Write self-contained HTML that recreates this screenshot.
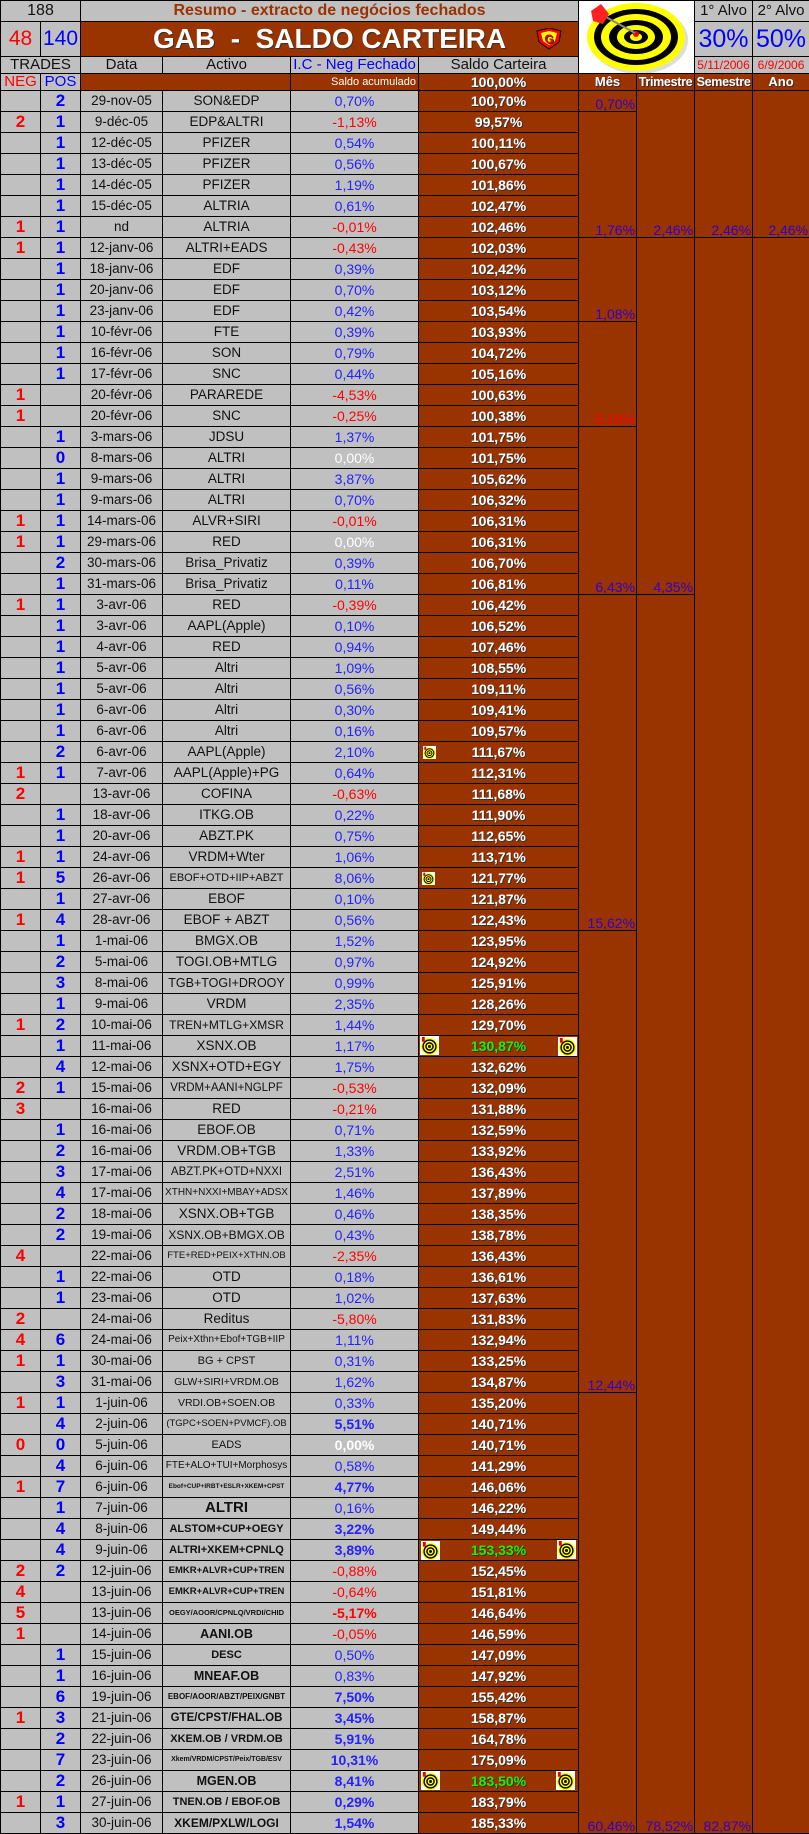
<!DOCTYPE html>
<html><head><meta charset="utf-8"><style>
*{margin:0;padding:0;box-sizing:border-box}
body{width:809px;height:1834px;background:#c0c0c0;font-family:"Liberation Sans",Arial,sans-serif;overflow:hidden}
table{border-collapse:collapse;table-layout:fixed;width:809px;position:absolute;left:0;top:0}
td{border:1px solid #000;text-align:center;font-size:13.5px;white-space:nowrap;overflow:hidden;padding:0;line-height:14px;color:#111}
tr{height:21px}
.n{color:#ff0000;font-weight:bold;font-size:17px}
.p{color:#0000ff;font-weight:bold;font-size:17px}
.b{color:#2222ff;font-size:14px}
.bb{color:#2222ff;font-weight:bold;font-size:14px}
.r{color:#ff0000;font-size:14px}
.rb{color:#ff0000;font-weight:bold;font-size:14px}
.w{color:#fff;font-size:14px}
.s{background:#993300;color:#fff;font-weight:bold;position:relative;text-shadow:1px 1px 0 #333;font-size:14px}
.g{color:#22ee00}
.m{background:#993300;vertical-align:bottom;text-align:right;color:#3300cc;font-size:14px;padding-right:1px}
.br{background:#993300}
.a{font-weight:bold}
.ic{position:absolute}
</style></head><body>
<svg width="0" height="0" style="position:absolute"><defs>
<g id="dt"><rect width="20" height="20" fill="#fff"/><circle cx="10" cy="11" r="9" fill="#ff0"/><circle cx="10" cy="11" r="7.5" fill="#000"/><circle cx="10" cy="11" r="6" fill="#ff0"/><circle cx="10" cy="11" r="4.5" fill="#000"/><circle cx="10" cy="11" r="3" fill="#ff0"/><circle cx="10" cy="11" r="1.5" fill="#000"/><rect x="2" y="1" width="3" height="5" fill="#e00"/></g>
</defs></svg>
<table>
<colgroup><col style="width:40px"><col style="width:40px"><col style="width:82px"><col style="width:128px"><col style="width:128px"><col style="width:160px"><col style="width:58px"><col style="width:58px"><col style="width:58px"><col style="width:57px"></colgroup>
<tr style="height:21px"><td colspan="2" style="font-size:16px">188</td><td colspan="4" style="color:#993300;font-weight:bold;font-size:16px">Resumo - extracto de negócios fechados</td>
<td colspan="2" rowspan="3" style="background:#fff;position:relative"><svg width="116" height="73" viewBox="0 0 116 73" style="position:absolute;left:0;top:0"><ellipse cx="60" cy="39" rx="49" ry="34" fill="#ddd"/><ellipse cx="57" cy="36" rx="49" ry="34" fill="#ff0"/><ellipse cx="57" cy="36" rx="42" ry="28" fill="#000"/><ellipse cx="57" cy="36" rx="35" ry="23" fill="#ff0"/><ellipse cx="57" cy="36" rx="27" ry="17" fill="#000"/><ellipse cx="57" cy="36" rx="19" ry="12" fill="#ff0"/><ellipse cx="57" cy="36" rx="12" ry="7" fill="#000"/><ellipse cx="57" cy="36" rx="6" ry="4" fill="#ff0"/><circle cx="57" cy="33" r="3" fill="#e00"/><line x1="25" y1="15" x2="56" y2="32" stroke="#888" stroke-width="2"/><polygon points="12,10 22,3 30,13 24,23 14,20" fill="#f22"/></svg></td>
<td style="font-size:15px">1° Alvo</td><td style="font-size:15px">2° Alvo</td></tr>
<tr style="height:35px"><td style="color:#f00;font-size:21px">48</td><td style="color:#00f;font-size:21px">140</td><td colspan="4" style="background:#993300;color:#fff;font-weight:bold;font-size:28px;position:relative;text-shadow:1px 1px 0 #333">GAB&nbsp; - &nbsp;SALDO CARTEIRA<svg width="30" height="22" viewBox="0 0 30 22" style="position:absolute;left:453px;top:6px"><polygon points="3,3 15,0 27,3 25,14 15,21 5,14" fill="#f00" stroke="#000"/><polygon points="7,5 15,3 23,5 21,13 15,17 9,13" fill="#ff0"/><text x="15" y="15" font-size="12" font-weight="bold" fill="#e00" text-anchor="middle" font-family="Liberation Sans">G</text></svg></td><td style="color:#00f;font-size:25px">30%</td><td style="color:#00f;font-size:25px">50%</td></tr>
<tr style="height:17px"><td colspan="2" style="font-size:15px">TRADES</td><td style="font-size:15px">Data</td><td style="font-size:15px">Activo</td><td style="color:#00f;font-size:15px">I.C - Neg Fechado</td><td style="font-size:15px">Saldo Carteira</td><td style="color:#f00;font-size:12px">5/11/2006</td><td style="color:#f00;font-size:12px">6/9/2006</td></tr>
<tr style="height:17px"><td style="color:#f00;font-size:15px">NEG</td><td style="color:#00f;font-size:15px">POS</td><td colspan="2" class="br"></td><td class="br" style="color:#fff;font-size:11px;text-align:right;padding-right:2px">Saldo acumulado</td><td class="s">100,00%</td><td class="s" style="font-size:13px">Mês</td><td class="s" style="font-size:12.5px;letter-spacing:-0.3px">Trimestre</td><td class="s" style="font-size:12.5px;letter-spacing:-0.3px">Semestre</td><td class="s" style="font-size:13px">Ano</td></tr>

<tr><td></td><td class="p">2</td><td>29-nov-05</td><td>SON&amp;EDP</td><td class="b">0,70%</td><td class="s">100,70%</td><td class="m">0,70%</td><td class="m" rowspan="7">2,46%</td><td class="m" rowspan="7">2,46%</td><td class="m" rowspan="7">2,46%</td></tr>
<tr><td class="n">2</td><td class="p">1</td><td>9-déc-05</td><td>EDP&amp;ALTRI</td><td class="r">-1,13%</td><td class="s">99,57%</td><td class="m" rowspan="6">1,76%</td></tr>
<tr><td></td><td class="p">1</td><td>12-déc-05</td><td>PFIZER</td><td class="b">0,54%</td><td class="s">100,11%</td></tr>
<tr><td></td><td class="p">1</td><td>13-déc-05</td><td>PFIZER</td><td class="b">0,56%</td><td class="s">100,67%</td></tr>
<tr><td></td><td class="p">1</td><td>14-déc-05</td><td>PFIZER</td><td class="b">1,19%</td><td class="s">101,86%</td></tr>
<tr><td></td><td class="p">1</td><td>15-déc-05</td><td>ALTRIA</td><td class="b">0,61%</td><td class="s">102,47%</td></tr>
<tr><td class="n">1</td><td class="p">1</td><td>nd</td><td>ALTRIA</td><td class="r">-0,01%</td><td class="s">102,46%</td></tr>
<tr><td class="n">1</td><td class="p">1</td><td>12-janv-06</td><td>ALTRI+EADS</td><td class="r">-0,43%</td><td class="s">102,03%</td><td class="m" rowspan="4">1,08%</td><td class="m" rowspan="17">4,35%</td><td class="m" rowspan="76">82,87%</td><td class="m" rowspan="76"></td></tr>
<tr><td></td><td class="p">1</td><td>18-janv-06</td><td>EDF</td><td class="b">0,39%</td><td class="s">102,42%</td></tr>
<tr><td></td><td class="p">1</td><td>20-janv-06</td><td>EDF</td><td class="b">0,70%</td><td class="s">103,12%</td></tr>
<tr><td></td><td class="p">1</td><td>23-janv-06</td><td>EDF</td><td class="b">0,42%</td><td class="s">103,54%</td></tr>
<tr><td></td><td class="p">1</td><td>10-févr-06</td><td>FTE</td><td class="b">0,39%</td><td class="s">103,93%</td><td class="m" rowspan="5" style="color:#f00">-3,16%</td></tr>
<tr><td></td><td class="p">1</td><td>16-févr-06</td><td>SON</td><td class="b">0,79%</td><td class="s">104,72%</td></tr>
<tr><td></td><td class="p">1</td><td>17-févr-06</td><td>SNC</td><td class="b">0,44%</td><td class="s">105,16%</td></tr>
<tr><td class="n">1</td><td></td><td>20-févr-06</td><td>PARAREDE</td><td class="r">-4,53%</td><td class="s">100,63%</td></tr>
<tr><td class="n">1</td><td></td><td>20-févr-06</td><td>SNC</td><td class="r">-0,25%</td><td class="s">100,38%</td></tr>
<tr><td></td><td class="p">1</td><td>3-mars-06</td><td>JDSU</td><td class="b">1,37%</td><td class="s">101,75%</td><td class="m" rowspan="8">6,43%</td></tr>
<tr><td></td><td class="p">0</td><td>8-mars-06</td><td>ALTRI</td><td class="w">0,00%</td><td class="s">101,75%</td></tr>
<tr><td></td><td class="p">1</td><td>9-mars-06</td><td>ALTRI</td><td class="b">3,87%</td><td class="s">105,62%</td></tr>
<tr><td></td><td class="p">1</td><td>9-mars-06</td><td>ALTRI</td><td class="b">0,70%</td><td class="s">106,32%</td></tr>
<tr><td class="n">1</td><td class="p">1</td><td>14-mars-06</td><td>ALVR+SIRI</td><td class="r">-0,01%</td><td class="s">106,31%</td></tr>
<tr><td class="n">1</td><td class="p">1</td><td>29-mars-06</td><td>RED</td><td class="w">0,00%</td><td class="s">106,31%</td></tr>
<tr><td></td><td class="p">2</td><td>30-mars-06</td><td>Brisa_Privatiz</td><td class="b">0,39%</td><td class="s">106,70%</td></tr>
<tr><td></td><td class="p">1</td><td>31-mars-06</td><td>Brisa_Privatiz</td><td class="b">0,11%</td><td class="s">106,81%</td></tr>
<tr><td class="n">1</td><td class="p">1</td><td>3-avr-06</td><td>RED</td><td class="r">-0,39%</td><td class="s">106,42%</td><td class="m" rowspan="16">15,62%</td><td class="m" rowspan="59">78,52%</td></tr>
<tr><td></td><td class="p">1</td><td>3-avr-06</td><td>AAPL(Apple)</td><td class="b">0,10%</td><td class="s">106,52%</td></tr>
<tr><td></td><td class="p">1</td><td>4-avr-06</td><td>RED</td><td class="b">0,94%</td><td class="s">107,46%</td></tr>
<tr><td></td><td class="p">1</td><td>5-avr-06</td><td>Altri</td><td class="b">1,09%</td><td class="s">108,55%</td></tr>
<tr><td></td><td class="p">1</td><td>5-avr-06</td><td>Altri</td><td class="b">0,56%</td><td class="s">109,11%</td></tr>
<tr><td></td><td class="p">1</td><td>6-avr-06</td><td>Altri</td><td class="b">0,30%</td><td class="s">109,41%</td></tr>
<tr><td></td><td class="p">1</td><td>6-avr-06</td><td>Altri</td><td class="b">0,16%</td><td class="s">109,57%</td></tr>
<tr><td></td><td class="p">2</td><td>6-avr-06</td><td>AAPL(Apple)</td><td class="b">2,10%</td><td class="s"><svg class="ic" width="13" height="13" viewBox="0 0 20 20" style="left:4px;top:4px"><use href="#dt"/></svg>111,67%</td></tr>
<tr><td class="n">1</td><td class="p">1</td><td>7-avr-06</td><td>AAPL(Apple)+PG</td><td class="b">0,64%</td><td class="s">112,31%</td></tr>
<tr><td class="n">2</td><td></td><td>13-avr-06</td><td>COFINA</td><td class="r">-0,63%</td><td class="s">111,68%</td></tr>
<tr><td></td><td class="p">1</td><td>18-avr-06</td><td>ITKG.OB</td><td class="b">0,22%</td><td class="s">111,90%</td></tr>
<tr><td></td><td class="p">1</td><td>20-avr-06</td><td>ABZT.PK</td><td class="b">0,75%</td><td class="s">112,65%</td></tr>
<tr><td class="n">1</td><td class="p">1</td><td>24-avr-06</td><td>VRDM+Wter</td><td class="b">1,06%</td><td class="s">113,71%</td></tr>
<tr><td class="n">1</td><td class="p">5</td><td>26-avr-06</td><td style="font-size:11px">EBOF+OTD+IIP+ABZT</td><td class="b">8,06%</td><td class="s"><svg class="ic" width="13" height="13" viewBox="0 0 20 20" style="left:3px;top:4px"><use href="#dt"/></svg>121,77%</td></tr>
<tr><td></td><td class="p">1</td><td>27-avr-06</td><td>EBOF</td><td class="b">0,10%</td><td class="s">121,87%</td></tr>
<tr><td class="n">1</td><td class="p">4</td><td>28-avr-06</td><td>EBOF + ABZT</td><td class="b">0,56%</td><td class="s">122,43%</td></tr>
<tr><td></td><td class="p">1</td><td>1-mai-06</td><td>BMGX.OB</td><td class="b">1,52%</td><td class="s">123,95%</td><td class="m" rowspan="22">12,44%</td></tr>
<tr><td></td><td class="p">2</td><td>5-mai-06</td><td>TOGI.OB+MTLG</td><td class="b">0,97%</td><td class="s">124,92%</td></tr>
<tr><td></td><td class="p">3</td><td>8-mai-06</td><td style="font-size:12.5px">TGB+TOGI+DROOY</td><td class="b">0,99%</td><td class="s">125,91%</td></tr>
<tr><td></td><td class="p">1</td><td>9-mai-06</td><td>VRDM</td><td class="b">2,35%</td><td class="s">128,26%</td></tr>
<tr><td class="n">1</td><td class="p">2</td><td>10-mai-06</td><td style="font-size:12px">TREN+MTLG+XMSR</td><td class="b">1,44%</td><td class="s">129,70%</td></tr>
<tr><td></td><td class="p">1</td><td>11-mai-06</td><td>XSNX.OB</td><td class="b">1,17%</td><td class="s"><svg class="ic" width="19" height="19" viewBox="0 0 20 20" style="left:1px;top:0px"><use href="#dt"/></svg><span class="g">130,87%</span><svg class="ic" width="19" height="19" viewBox="0 0 20 20" style="left:139px;top:1px"><use href="#dt"/></svg></td></tr>
<tr><td></td><td class="p">4</td><td>12-mai-06</td><td>XSNX+OTD+EGY</td><td class="b">1,75%</td><td class="s">132,62%</td></tr>
<tr><td class="n">2</td><td class="p">1</td><td>15-mai-06</td><td style="font-size:11.5px">VRDM+AANI+NGLPF</td><td class="r">-0,53%</td><td class="s">132,09%</td></tr>
<tr><td class="n">3</td><td></td><td>16-mai-06</td><td>RED</td><td class="r">-0,21%</td><td class="s">131,88%</td></tr>
<tr><td></td><td class="p">1</td><td>16-mai-06</td><td>EBOF.OB</td><td class="b">0,71%</td><td class="s">132,59%</td></tr>
<tr><td></td><td class="p">2</td><td>16-mai-06</td><td>VRDM.OB+TGB</td><td class="b">1,33%</td><td class="s">133,92%</td></tr>
<tr><td></td><td class="p">3</td><td>17-mai-06</td><td style="font-size:11.5px">ABZT.PK+OTD+NXXI</td><td class="b">2,51%</td><td class="s">136,43%</td></tr>
<tr><td></td><td class="p">4</td><td>17-mai-06</td><td style="font-size:10px">XTHN+NXXI+MBAY+ADSX</td><td class="b">1,46%</td><td class="s">137,89%</td></tr>
<tr><td></td><td class="p">2</td><td>18-mai-06</td><td>XSNX.OB+TGB</td><td class="b">0,46%</td><td class="s">138,35%</td></tr>
<tr><td></td><td class="p">2</td><td>19-mai-06</td><td style="font-size:12px">XSNX.OB+BMGX.OB</td><td class="b">0,43%</td><td class="s">138,78%</td></tr>
<tr><td class="n">4</td><td></td><td>22-mai-06</td><td style="font-size:9.5px">FTE+RED+PEIX+XTHN.OB</td><td class="r">-2,35%</td><td class="s">136,43%</td></tr>
<tr><td></td><td class="p">1</td><td>22-mai-06</td><td>OTD</td><td class="b">0,18%</td><td class="s">136,61%</td></tr>
<tr><td></td><td class="p">1</td><td>23-mai-06</td><td>OTD</td><td class="b">1,02%</td><td class="s">137,63%</td></tr>
<tr><td class="n">2</td><td></td><td>24-mai-06</td><td>Reditus</td><td class="r">-5,80%</td><td class="s">131,83%</td></tr>
<tr><td class="n">4</td><td class="p">6</td><td>24-mai-06</td><td style="font-size:10px">Peix+Xthn+Ebof+TGB+IIP</td><td class="b">1,11%</td><td class="s">132,94%</td></tr>
<tr><td class="n">1</td><td class="p">1</td><td>30-mai-06</td><td style="font-size:11px">BG + CPST</td><td class="b">0,31%</td><td class="s">133,25%</td></tr>
<tr><td></td><td class="p">3</td><td>31-mai-06</td><td style="font-size:10.5px">GLW+SIRI+VRDM.OB</td><td class="b">1,62%</td><td class="s">134,87%</td></tr>
<tr><td class="n">1</td><td class="p">1</td><td>1-juin-06</td><td style="font-size:10.5px">VRDI.OB+SOEN.OB</td><td class="b">0,33%</td><td class="s">135,20%</td><td class="m" rowspan="21">60,46%</td></tr>
<tr><td></td><td class="p">4</td><td>2-juin-06</td><td style="font-size:9.5px">(TGPC+SOEN+PVMCF).OB</td><td class="bb">5,51%</td><td class="s">140,71%</td></tr>
<tr><td class="n">0</td><td class="p">0</td><td>5-juin-06</td><td style="font-size:11px">EADS</td><td class="w a">0,00%</td><td class="s">140,71%</td></tr>
<tr><td></td><td class="p">4</td><td>6-juin-06</td><td style="font-size:10px">FTE+ALO+TUI+Morphosys</td><td class="b">0,58%</td><td class="s">141,29%</td></tr>
<tr><td class="n">1</td><td class="p">7</td><td>6-juin-06</td><td class="a" style="font-size:6.5px">Ebof+CUP+IRBT+ESLR+XKEM+CPST</td><td class="bb">4,77%</td><td class="s">146,06%</td></tr>
<tr><td></td><td class="p">1</td><td>7-juin-06</td><td class="a" style="font-size:15px">ALTRI</td><td class="b">0,16%</td><td class="s">146,22%</td></tr>
<tr><td></td><td class="p">4</td><td>8-juin-06</td><td class="a" style="font-size:11px">ALSTOM+CUP+OEGY</td><td class="bb">3,22%</td><td class="s">149,44%</td></tr>
<tr><td></td><td class="p">4</td><td>9-juin-06</td><td class="a" style="font-size:11px">ALTRI+XKEM+CPNLQ</td><td class="bb">3,89%</td><td class="s"><svg class="ic" width="19" height="19" viewBox="0 0 20 20" style="left:2px;top:1px"><use href="#dt"/></svg><span class="g">153,33%</span><svg class="ic" width="19" height="19" viewBox="0 0 20 20" style="left:138px;top:0px"><use href="#dt"/></svg></td></tr>
<tr><td class="n">2</td><td class="p">2</td><td>12-juin-06</td><td class="a" style="font-size:9.5px">EMKR+ALVR+CUP+TREN</td><td class="r">-0,88%</td><td class="s">152,45%</td></tr>
<tr><td class="n">4</td><td></td><td>13-juin-06</td><td class="a" style="font-size:9.5px">EMKR+ALVR+CUP+TREN</td><td class="r">-0,64%</td><td class="s">151,81%</td></tr>
<tr><td class="n">5</td><td></td><td>13-juin-06</td><td class="a" style="font-size:7.5px">OEGY/AOOR/CPNLQ/VRDI/CHID</td><td class="rb">-5,17%</td><td class="s">146,64%</td></tr>
<tr><td class="n">1</td><td></td><td>14-juin-06</td><td class="a" style="font-size:12.5px">AANI.OB</td><td class="r">-0,05%</td><td class="s">146,59%</td></tr>
<tr><td></td><td class="p">1</td><td>15-juin-06</td><td class="a" style="font-size:11px">DESC</td><td class="b">0,50%</td><td class="s">147,09%</td></tr>
<tr><td></td><td class="p">1</td><td>16-juin-06</td><td class="a" style="font-size:12.5px">MNEAF.OB</td><td class="b">0,83%</td><td class="s">147,92%</td></tr>
<tr><td></td><td class="p">6</td><td>19-juin-06</td><td class="a" style="font-size:8px">EBOF/AOOR/ABZT/PEIX/GNBT</td><td class="bb">7,50%</td><td class="s">155,42%</td></tr>
<tr><td class="n">1</td><td class="p">3</td><td>21-juin-06</td><td class="a" style="font-size:11.5px">GTE/CPST/FHAL.OB</td><td class="bb">3,45%</td><td class="s">158,87%</td></tr>
<tr><td></td><td class="p">2</td><td>22-juin-06</td><td class="a" style="font-size:11px">XKEM.OB / VRDM.OB</td><td class="bb">5,91%</td><td class="s">164,78%</td></tr>
<tr><td></td><td class="p">7</td><td>23-juin-06</td><td class="a" style="font-size:7px">Xkem/VRDM/CPST/Peix/TGB/ESV</td><td class="bb">10,31%</td><td class="s">175,09%</td></tr>
<tr><td></td><td class="p">2</td><td>26-juin-06</td><td class="a" style="font-size:12.5px">MGEN.OB</td><td class="bb">8,41%</td><td class="s"><svg class="ic" width="19" height="19" viewBox="0 0 20 20" style="left:2px;top:0px"><use href="#dt"/></svg><span class="g">183,50%</span><svg class="ic" width="19" height="19" viewBox="0 0 20 20" style="left:137px;top:0px"><use href="#dt"/></svg></td></tr>
<tr><td class="n">1</td><td class="p">1</td><td>27-juin-06</td><td class="a" style="font-size:11px">TNEN.OB / EBOF.OB</td><td class="bb">0,29%</td><td class="s">183,79%</td></tr>
<tr><td></td><td class="p">3</td><td>30-juin-06</td><td class="a" style="font-size:12px">XKEM/PXLW/LOGI</td><td class="bb">1,54%</td><td class="s">185,33%</td></tr>
</table>
</body></html>
